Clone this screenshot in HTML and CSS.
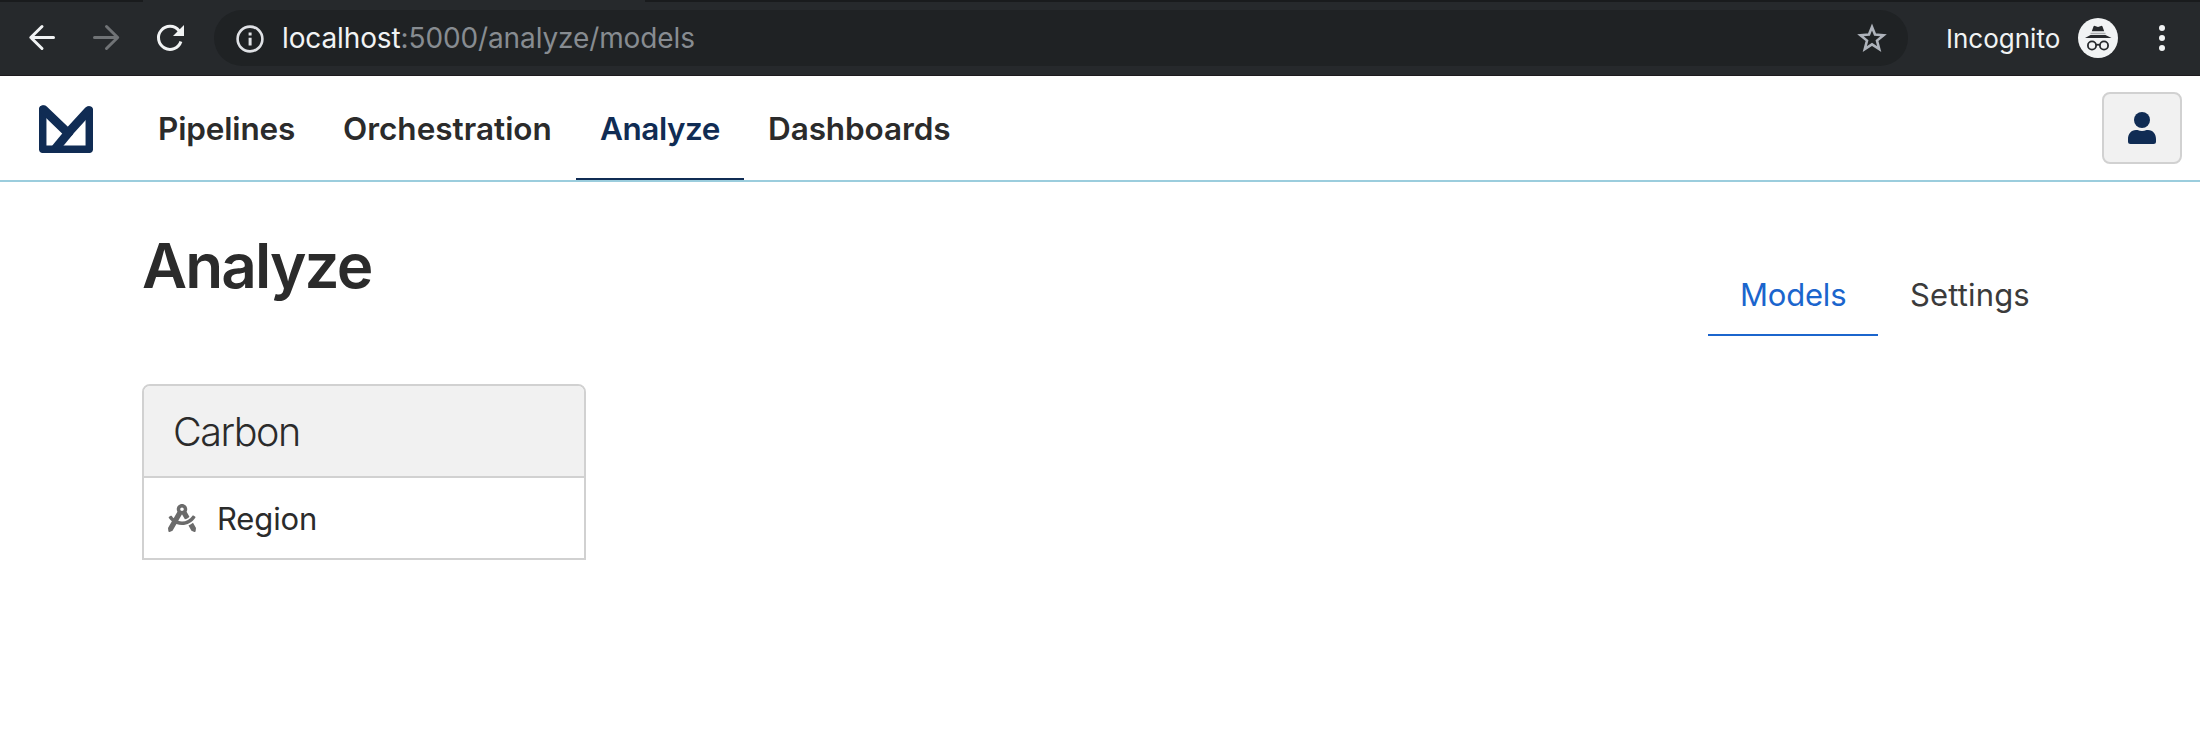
FILE: index.html
```html
<!DOCTYPE html>
<html lang="en">
<head>
<meta charset="utf-8">
<title>Analyze</title>
<link rel="stylesheet" href="styles.css">
</head>
<body>
<div class="browser">
  <div class="tabstrip"><span class="tab-edge"></span></div>
  <div class="toolbar">
    <svg class="nav-icons" width="214" height="56" viewBox="0 10 214 56" fill="none" stroke="#f1f3f4" stroke-width="3" stroke-linecap="round" stroke-linejoin="round">
      <path d="M53.5 37.5H31M42 26.5L30.8 37.5L42 48.5"/>
      <path stroke="#707376" d="M94.500 37.500H117M106.500 26.500L117.700 37.500L106.500 48.500"/>
      <path stroke-linecap="butt" d="M179 30.700A11.500 11.500 0 1 0 180.900 41.500"/>
      <path fill="#f1f3f4" stroke="none" d="M184 25V36H173Z"/>
    </svg>
    <div class="omnibox">
      <svg class="info" width="28" height="28" viewBox="0 0 28 28"><circle cx="14" cy="14" r="12.400" fill="none" stroke="#dfe1e5" stroke-width="2.600"/><path fill="#dfe1e5" d="M12.600 7.400h3v3h-3zM12.600 12.800h3v7.800h-3z"/></svg>
      <span class="url"><span class="host">localhost</span><span class="path">:5000/analyze/models</span></span>
      <svg class="star" width="30" height="30" viewBox="0 0 30 30" fill="none" stroke="#aeb3bb" stroke-width="2.600"><path d="M15 4L18 11.600L26.500 12.200L20 17.600L22.200 26L15 21.400L7.800 26L10 17.600L3.500 12.200L12 11.600Z"/></svg>
    </div>
    <span class="incognito">Incognito</span>
    <svg class="avatar" width="40" height="40" viewBox="0 0 40 40">
      <circle cx="20" cy="20" r="20" fill="#f1f3f4"/>
      <g fill="#26292c"><path d="M15.600 8.200Q16 7.600 17 7.900L20 8.900L23 7.900Q24 7.600 24.400 8.200L26.200 13.300H13.800Z"/><path d="M7 20L12.500 17H27.500L33.500 20Z"/></g>
      <path stroke="#a9acaf" stroke-width="1.500" d="M12.500 15.500H27.500"/>
      <g fill="none" stroke="#26292c" stroke-width="1.800"><circle cx="14" cy="27.500" r="4.100"/><circle cx="26" cy="27.500" r="4.100"/><path d="M18 27.200Q20 25.900 22 27.200"/></g>
    </svg>
    <svg class="kebab" width="6" height="26" viewBox="0 0 6 26" fill="#f1f3f4"><circle cx="3" cy="3" r="3"/><circle cx="3" cy="13" r="3"/><circle cx="3" cy="23" r="3"/></svg>
  </div>
</div>
<header class="navbar">
  <svg class="logo" width="54" height="48" viewBox="0 0 54 48" fill="none" stroke="#102c54" stroke-width="7.500" stroke-linejoin="round" stroke-linecap="round"><path d="M3.700 44.300V4.200M3.700 44.300H50.300V5"/><path stroke-width="8.800" d="M4.700 4.600L29 28M49.400 5.600L29 28"/><path stroke-width="8.800" stroke-linecap="butt" d="M31 26L16.500 43.500"/></svg>
  <nav class="menu">
    <a class="item pipelines">Pipelines</a>
    <a class="item orchestration">Orchestration</a>
    <a class="item active">Analyze</a>
    <a class="item dashboards">Dashboards</a>
  </nav>
  <button class="user" aria-label="Account">
    <svg width="28" height="32" viewBox="0 0 28 32" fill="#102c54"><circle cx="14" cy="8" r="8"/><path d="M8 18H9.500Q14 19.800 18.500 18H20C25 18 28 22 28 27V29.500Q28 32 25.500 32H2.500Q0 32 0 29.500V27C0 22 3 18 8 18Z"/></svg>
  </button>
</header>
<main class="page">
  <div class="heading">
    <h1>Analyze</h1>
    <div class="tabs"><a class="tab selected">Models</a><a class="tab settings">Settings</a></div>
  </div>
  <section class="card">
    <h2>Carbon</h2>
    <div class="row">
      <svg width="28" height="28" viewBox="0 0 512 512" fill="#6b6b6b"><path d="M457.010 344.420c-25.050 20.330-52.630 37.180-82.540 49.050l54.380 94.190 53.950 23.040c9.810 4.190 20.890-2.210 22.170-12.800l7.020-58.250-54.980-95.230zm42.490-94.560c4.860-7.670 1.890-17.990-6.050-22.390l-28.070-15.570c-7.480-4.150-16.610-1.460-21.260 5.720C403.010 281.150 332.250 320 256 320c-23.930 0-47.230-4.250-69.410-11.530l67.360-116.680c.7.020 1.340.21 2.040.21s1.350-.19 2.040-.21l51.090 88.500c31.230-8.960 59.560-25.750 82.610-48.920l-51.790-89.710C347.390 128.030 352 112.630 352 96c0-53.020-42.980-96-96-96s-96 42.980-96 96c0 16.630 4.610 32.030 12.050 45.660l-68.300 118.310c-12.550-11.610-23.960-24.590-33.680-39-4.790-7.100-13.970-9.620-21.380-5.330l-27.750 16.070c-7.850 4.540-10.630 14.900-5.640 22.470 15.570 23.640 34.690 44.210 55.980 62.020L0 439.660l7.020 58.250c1.280 10.590 12.360 16.990 22.170 12.800l53.950-23.040 70.800-122.630C186.130 377.280 220.620 384 256 384c99.050 0 190.880-51.010 243.500-134.140zM256 64c17.670 0 32 14.330 32 32s-14.330 32-32 32-32-14.330-32-32 14.330-32 32-32z"/></svg>
      <span>Region</span>
    </div>
  </section>
</main>
</body>
</html>
```
FILE: styles.css
```css
* { box-sizing: border-box; }
body { margin: 0; background: #fff; color: #2b2b2b; font-family: Inter, "Liberation Sans", sans-serif; }
svg { display: block; flex: none; }
.browser { height: 76px; background: #26292c; border-bottom: 1px solid #1d1a1e; }
.tabstrip { height: 2px; background: #191b1d; padding-left: 143px; }
.tab-edge { display: block; width: 502px; height: 2px; background: #26292c; }
.toolbar { display: flex; align-items: center; height: 72px; }
.omnibox { width: 1694px; height: 56px; border-radius: 28px; background: #1f2224; display: flex; align-items: center; padding: 0 21px 0 22px; }
.info { margin-top: 1px; }
.url { flex: 1; margin-left: 18px; font-size: 28px; line-height: 40px; letter-spacing: -.120px; white-space: nowrap; }
.host { color: #f1f3f4; }
.path { color: #878c91; }
.incognito { margin: 2px 0 0 38px; width: 114px; font-size: 26px; line-height: 36px; color: #f1f3f4; white-space: nowrap; }
.avatar { margin-left: 18px; }
.kebab { margin-left: 41px; }
.navbar { height: 106px; border-bottom: 2px solid #9bcddd; display: flex; padding: 0 18px 0 39px; }
.logo { margin-top: 29px; }
.menu { display: flex; flex: 1; margin-left: 41px; }
.item { height: 104px; line-height: 106px; padding-left: 24px; font-size: 31.500px; font-weight: 600; border-bottom: 2px solid transparent; white-space: nowrap; }
.pipelines { width: 185px; letter-spacing: -.15px; }
.orchestration { width: 257px; }
.active { width: 168px; color: #102c54; letter-spacing: -.45px; border-bottom-color: #102c54; }
.dashboards { letter-spacing: -.1px; }
.user { width: 80px; height: 72px; margin-top: 16px; border: 2px solid #d1d1d1; border-radius: 8px; background: #f1f1f1; display: flex; align-items: center; justify-content: center; padding: 0; }
.page { padding: 44px 142px 0; }
.heading { display: flex; justify-content: space-between; height: 110px; }
h1 { margin: 0; font-size: 62px; line-height: 80px; font-weight: 600; letter-spacing: -1.850px; }
.tabs { display: flex; height: 72px; margin-top: 38px; }
.tab { height: 72px; line-height: 62px; padding-left: 32px; font-size: 31px; color: #3b3b3b; border-bottom: 2px solid transparent; }
.selected { width: 170px; color: #1b65cd; letter-spacing: -.2px; border-bottom-color: #1b65cd; }
.settings { width: 180px; letter-spacing: .15px; }
.card { width: 444px; height: 176px; margin-top: 48px; border: 2px solid #d1d1d1; border-radius: 8px 8px 0 0; overflow: hidden; }
h2 { margin: 0; height: 92px; padding-left: 29px; background: #f1f1f1; border-bottom: 2px solid #d1d1d1; font-size: 39.500px; line-height: 92px; font-weight: 300; letter-spacing: -1.450px; }
.row { display: flex; align-items: center; height: 80px; padding-left: 24px; gap: 21px; font-size: 31px; letter-spacing: -.15px; color: #2b2b2b; }
```
